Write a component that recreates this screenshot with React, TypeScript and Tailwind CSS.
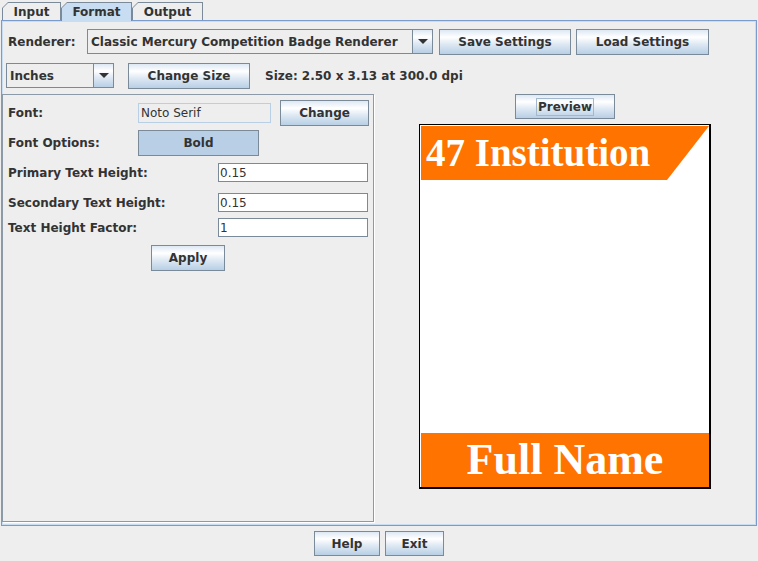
import React from "react";

const btn =
  "flex items-center justify-center border border-[#7a8a99] bg-[linear-gradient(to_bottom,#dde8f3_0%,#ffffff_30%,#dde8f3_60%,#b8cfe5_100%)] font-bold text-[12px] text-[#333333]";

function Arrow() {
  return (
    <svg width="10" height="5" viewBox="0 0 10 5">
      <polygon points="0,0 10,0 5,5" fill="#333333" />
    </svg>
  );
}

function Combo({ label, width }: { label: string; width: string }) {
  return (
    <div className={`flex h-[25px] border border-[#7a8a99] bg-[#eeeeee] ${width}`}>
      <div className="flex-1 flex items-center pl-[3px] font-bold whitespace-nowrap overflow-hidden">
        {label}
      </div>
      <div className="w-[20px] flex items-center justify-center border-l border-[#7a8a99] bg-[linear-gradient(to_bottom,#dde8f3_0%,#ffffff_30%,#dde8f3_60%,#b8cfe5_100%)]">
        <Arrow />
      </div>
    </div>
  );
}

function Tab({ label, width, selected }: { label: string; width: string; selected?: boolean }) {
  return (
    <div
      className={`${width} bg-[#7a8a99] pt-[1px] px-[1px] [clip-path:polygon(6px_0,100%_0,100%_100%,0_100%,0_6px)] ${
        selected ? "h-[19px] -mb-[1px] relative z-10" : "h-[18px]"
      }`}
    >
      <div
        className={`h-full flex items-center justify-center font-bold [clip-path:polygon(5px_0,100%_0,100%_100%,0_100%,0_5px)] ${
          selected ? "bg-[#c8ddf2]" : "bg-[#eeeeee]"
        }`}
      >
        {label}
      </div>
    </div>
  );
}

function Field({ value, width }: { value: string; width: string }) {
  return (
    <div className={`h-[19px] ${width} bg-white border border-[#7a8a99] flex items-center pl-[1px]`}>
      {value}
    </div>
  );
}

export default function App() {
  return (
    <div className="w-[758px] h-[561px] bg-[#eeeeee] text-[#333333] font-['DejaVu_Sans',sans-serif] text-[12px] flex flex-col overflow-hidden">
      {/* tabs */}
      <div className="h-[20px] flex items-end pl-[2px]">
        <Tab label="Input" width="w-[59px]" />
        <Tab label="Format" width="w-[71px]" selected />
        <Tab label="Output" width="w-[71px]" />
      </div>

      {/* tab content */}
      <div className="ml-[1px] w-[756px] h-[506px] border border-[#7a9ccc] shadow-[inset_0_0_0_1px_#c8ddf2] pt-[8px] flex flex-col">
        <div className="flex items-start h-[26px]">
          <div className="ml-[6px] w-[79px] h-[25px] flex items-center font-bold">Renderer:</div>
          <Combo label="Classic Mercury Competition Badge Renderer" width="w-[346px]" />
          <button className={`${btn} ml-[6px] w-[132px] h-[26px]`}>Save Settings</button>
          <button className={`${btn} ml-[5px] w-[133px] h-[26px]`}>Load Settings</button>
        </div>

        <div className="flex items-start h-[26px] mt-[8px]">
          <div className="ml-[4px]">
            <Combo label="Inches" width="w-[108px]" />
          </div>
          <button className={`${btn} ml-[14px] w-[122px] h-[26px]`}>Change Size</button>
          <div className="ml-[15px] h-[25px] flex items-center font-bold">Size: 2.50 x 3.13 at 300.0 dpi</div>
        </div>

        <div className="flex mt-[5px]">
          {/* settings panel */}
          <div className="w-[372px] h-[428px] border border-[#8c9aa8] shadow-[1px_1px_0_#ffffff] pt-[5px] pl-[5px] flex flex-col">
            <div className="flex items-center h-[26px]">
              <div className="w-[130px] font-bold">Font:</div>
              <div className="w-[133px] h-[20px] border border-[#b8cfe5] flex items-center pl-[2px]">Noto Serif</div>
              <button className={`${btn} ml-[9px] w-[89px] h-[26px]`}>Change</button>
            </div>
            <div className="flex items-center h-[26px] mt-[4px]">
              <div className="w-[130px] font-bold">Font Options:</div>
              <div className="w-[121px] h-[26px] border border-[#7a8a99] bg-[#b8cfe5] flex items-center justify-center font-bold">
                Bold
              </div>
            </div>
            <div className="flex items-center h-[19px] mt-[7px]">
              <div className="w-[210px] font-bold">Primary Text Height:</div>
              <Field value="0.15" width="w-[150px]" />
            </div>
            <div className="flex items-center h-[19px] mt-[11px]">
              <div className="w-[210px] font-bold">Secondary Text Height:</div>
              <Field value="0.15" width="w-[150px]" />
            </div>
            <div className="flex items-center h-[19px] mt-[6px]">
              <div className="w-[210px] font-bold">Text Height Factor:</div>
              <Field value="1" width="w-[150px]" />
            </div>
            <div className="flex justify-center mt-[8px] pr-[5px]">
              <button className={`${btn} w-[74px] h-[26px]`}>Apply</button>
            </div>
          </div>

          {/* preview */}
          <div className="flex-1 flex flex-col items-center">
            <button className={`${btn} w-[100px] h-[25px]`}>
              <span className="border border-[#a3b8cc] px-[1px] h-[18px] flex items-center">Preview</span>
            </button>
            <div className="mt-[5px] w-[292px] h-[365px] bg-white border-black border-l border-t border-r-2 border-b-2 pl-[1px] pt-[1px] flex flex-col">
              <div className="h-[54px] bg-[#ff7300] [clip-path:polygon(0_0,100%_0,calc(100%_-_42px)_100%,0_100%)] pl-[5px] text-white font-bold font-['Liberation_Serif',serif] text-[39px] leading-[54px] whitespace-nowrap">
                47 Institution
              </div>
              <div className="flex-1" />
              <div className="h-[54px] bg-[#ff7300] text-white font-bold font-['Liberation_Serif',serif] text-[44px] leading-[54px] text-center whitespace-nowrap">
                Full Name
              </div>
            </div>
          </div>
        </div>
      </div>

      <div className="flex justify-center gap-[5px] mt-[5px]">
        <button className={`${btn} w-[66px] h-[25px]`}>Help</button>
        <button className={`${btn} w-[59px] h-[25px]`}>Exit</button>
      </div>
    </div>
  );
}
